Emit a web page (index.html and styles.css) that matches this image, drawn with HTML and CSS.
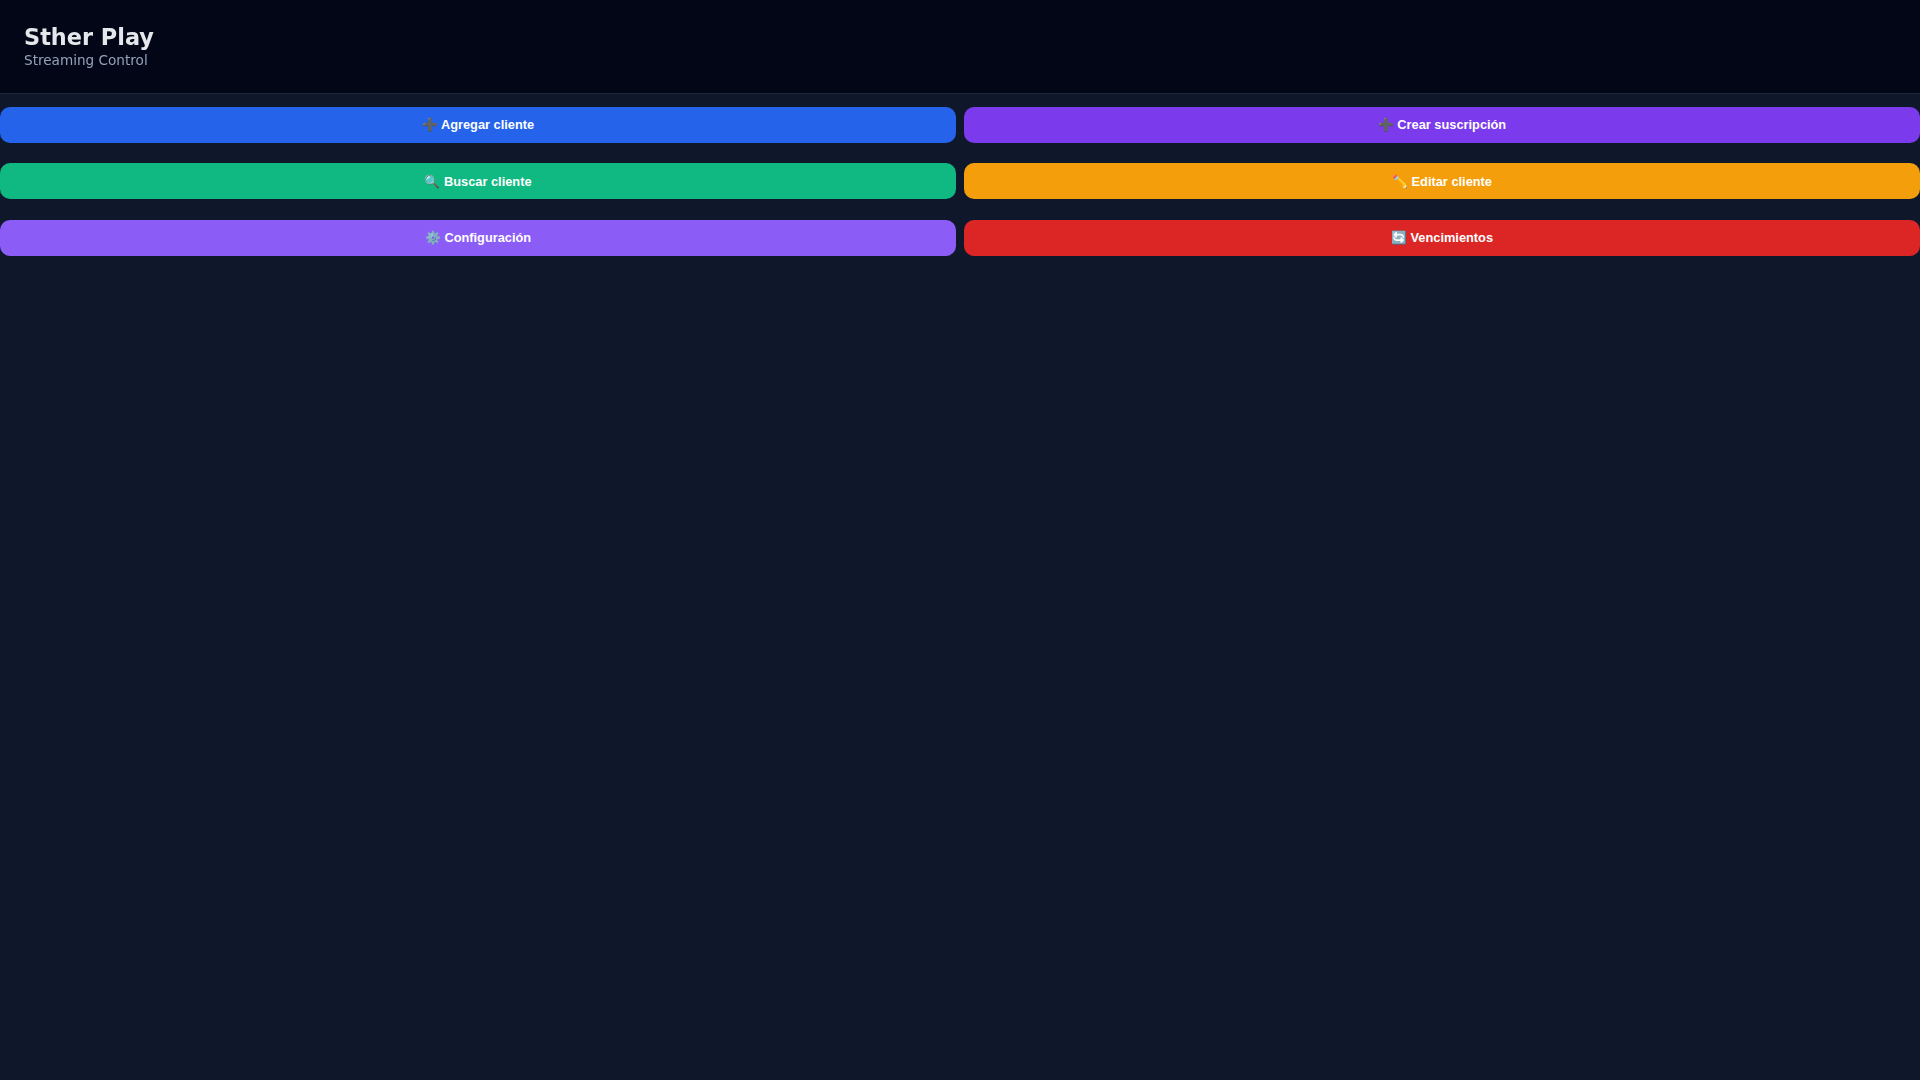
FILE: index.html
```html
<!DOCTYPE html>
<html lang="es">
<head>
    <meta charset="UTF-8">
    <meta name="viewport" content="width=device-width, initial-scale=1.0">
    <title>Sther Play</title>
    <link rel="stylesheet" href="styles.css">
</head>
<body>

    <header class="header">
        <h1>Sther Play</h1>
        <p>Streaming Control</p>
    </header>

    <main class="actions">
        <button class="btn btn-blue">➕ Agregar cliente</button>
        <button class="btn btn-violet">➕ Crear suscripción</button>
        <button class="btn btn-green">🔍 Buscar cliente</button>
        <button class="btn btn-orange">✏️ Editar cliente</button>
        <button class="btn btn-purple">⚙️ Configuración</button>
        <button class="btn btn-red">🔄 Vencimientos</button>
    </main>

</body>
</html>
```

FILE: styles.css
```css
body {
    font-family: "DejaVu Sans", sans-serif;
    margin: 0;
    padding: 0;
    min-height: 100vh;
    background-color: #0f172a;
    color: #e5e7eb;
}

.header {
    height: 94px;
    box-sizing: border-box;
    padding: 24px 24px 0;
    background-color: #020617;
    border-bottom: 1px solid #1e293b;
}

.header h1 {
    margin: 0 0 2px;
    font-size: 22.4px;
    line-height: 26px;
    font-weight: 700;
    will-change: opacity;
}

.header p {
    margin: 0;
    font-size: 13.6px;
    line-height: 17px;
    color: #94a3b8;
    will-change: opacity;
}

.actions {
    display: grid;
    grid-template-columns: 1fr 1fr;
    column-gap: 8px;
    row-gap: 20.4px;
    padding-top: 12.8px;
}

.btn {
    height: 36px;
    border: none;
    border-radius: 10px;
    color: #fff;
    font-family: "Liberation Sans", Arial, sans-serif;
    font-size: 12.8px;
    font-weight: 700;
}

.btn-blue { background-color: #2563eb; }
.btn-violet { background-color: #7c3aed; }
.btn-green { background-color: #10b981; }
.btn-orange { background-color: #f59e0b; }
.btn-purple { background-color: #8b5cf6; }
.btn-red { background-color: #dc2626; }
```
